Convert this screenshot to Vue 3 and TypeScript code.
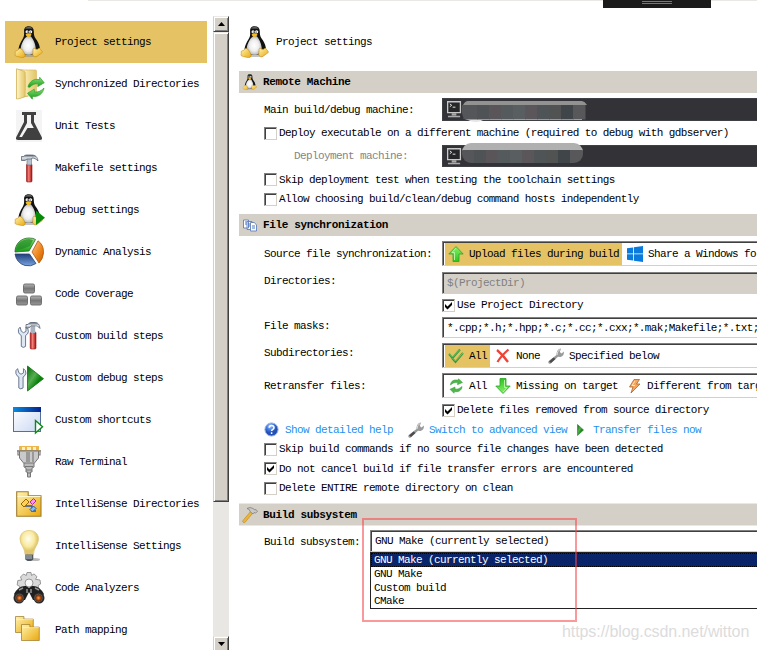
<script setup lang="ts">
interface NavItem { icon: string; label: string }

const nav: NavItem[] = [
  { icon: 'tux', label: 'Project settings' },
  { icon: 'syncdir', label: 'Synchronized Directories' },
  { icon: 'flask', label: 'Unit Tests' },
  { icon: 'hammer', label: 'Makefile settings' },
  { icon: 'tuxplay', label: 'Debug settings' },
  { icon: 'pie', label: 'Dynamic Analysis' },
  { icon: 'blocks', label: 'Code Coverage' },
  { icon: 'tools', label: 'Custom build steps' },
  { icon: 'toolplay', label: 'Custom debug steps' },
  { icon: 'window', label: 'Custom shortcuts' },
  { icon: 'serial', label: 'Raw Terminal' },
  { icon: 'intelli', label: 'IntelliSense Directories' },
  { icon: 'bulb', label: 'IntelliSense Settings' },
  { icon: 'binoc', label: 'Code Analyzers' },
  { icon: 'folders', label: 'Path mapping' },
]

const options: string[] = ['GNU Make (currently selected)', 'GNU Make', 'Custom build', 'CMake']
const mosaic: string[] = ['#54565a', '#505356', '#5a5558', '#555a5c', '#595e60', '#5b5659', '#4f5456', '#505352', '#40454a', '#58575a']
</script>

<template>
  <div class="page">
    <svg class="defs" width="0" height="0">
      <defs>
        <linearGradient id="gYellow" x1="0" y1="0" x2="1" y2="1"><stop offset="0" stop-color="#fff3b0" /><stop offset="1" stop-color="#eaa80c" /></linearGradient>
        <linearGradient id="gPale" x1="0" y1="0" x2="1" y2="0"><stop offset="0" stop-color="#fff6c8" /><stop offset="1" stop-color="#e3c566" /></linearGradient>
        <linearGradient id="gRed" x1="0" y1="0" x2="1" y2="0"><stop offset="0" stop-color="#a81414" /><stop offset=".4" stop-color="#f48078" /><stop offset="1" stop-color="#a30e0e" /></linearGradient>
        <linearGradient id="gSteel" x1="0" y1="0" x2="0" y2="1"><stop offset="0" stop-color="#59616e" /><stop offset=".5" stop-color="#e6ebf1" /><stop offset="1" stop-color="#788495" /></linearGradient>
        <linearGradient id="gGreen" x1="0" y1="0" x2="0" y2="1"><stop offset="0" stop-color="#8de37a" /><stop offset="1" stop-color="#159a16" /></linearGradient>
        <linearGradient id="gArrow" x1="0" y1="0" x2="0" y2="1"><stop offset="0" stop-color="#8af06a" /><stop offset="1" stop-color="#2cc41c" /></linearGradient>
        <linearGradient id="gPlay" x1="0" y1="0" x2="1" y2="1"><stop offset="0" stop-color="#06690a" /><stop offset=".4" stop-color="#54ae50" /><stop offset=".65" stop-color="#087f0a" /><stop offset="1" stop-color="#14b514" /></linearGradient>
        <linearGradient id="gBlue" x1="0" y1="0" x2="0" y2="1"><stop offset="0" stop-color="#203f7b" /><stop offset="1" stop-color="#78a5e0" /></linearGradient>
        <linearGradient id="gOrange" x1="0" y1="0" x2="1" y2="1"><stop offset="0" stop-color="#ffc38b" /><stop offset=".6" stop-color="#ed8117" /><stop offset="1" stop-color="#bd5a06" /></linearGradient>
        <linearGradient id="gGrey" x1="0" y1="0" x2="0" y2="1"><stop offset="0" stop-color="#b5b5b5" /><stop offset=".5" stop-color="#777" /><stop offset="1" stop-color="#989898" /></linearGradient>
        <linearGradient id="gWin" x1="0" y1="0" x2="1" y2="1"><stop offset="0" stop-color="#fff" /><stop offset="1" stop-color="#cad8f4" /></linearGradient>
        <linearGradient id="gBar" x1="0" y1="0" x2="1" y2="0"><stop offset="0" stop-color="#0a8ce0" /><stop offset="1" stop-color="#05248f" /></linearGradient>
        <radialGradient id="gBelly"><stop offset="0" stop-color="#fff" /><stop offset=".6" stop-color="#eee" /><stop offset="1" stop-color="#bcbcbc" /></radialGradient>
        <radialGradient id="gBulb" cx=".45" cy=".35"><stop offset="0" stop-color="#fffdf0" /><stop offset=".65" stop-color="#f9eaa0" /><stop offset="1" stop-color="#dfc66c" /></radialGradient>
        <radialGradient id="gLens"><stop offset="0" stop-color="#ffa04c" /><stop offset=".5" stop-color="#b34a0c" /><stop offset="1" stop-color="#2b1c14" /></radialGradient>
        <radialGradient id="gHelp" cx=".4" cy=".25"><stop offset="0" stop-color="#9fc4ff" /><stop offset=".6" stop-color="#3f76de" /><stop offset="1" stop-color="#2450b4" /></radialGradient>
      </defs>

      <symbol id="tux" viewBox="0 0 32 32">
        <ellipse cx="16" cy="29.5" rx="9" ry="1.6" fill="#888" opacity=".5" />
        <path d="M15.600.2c-3.400 0-4.600 2.200-4.500 5 .1 3.600.2 5.200-1.600 8C7.600 16.300 6 19.400 5.600 22.500c-.2 2.300 1 4 3.400 6h14c3-1.500 4.300-4 3.800-7-.5-3.300-2.200-6.400-4.200-9-1.500-2-1.800-4-1.800-7.200C20.800 2 19 .2 15.600.2z" fill="#111" />
        <path d="M12 2.500c.7-1.600 6.500-1.800 7.600 0z" fill="#7b7b7b" />
        <path d="M14.500 10.300c-2.200 1.200-3.700 3.200-4.900 5.700-1.600 3.300-2.500 6-1.300 9 1.500 3.200 5.300 4.300 8.700 3.700 4.200-.8 6-4 5.600-7.700-.5-4-2.600-8.200-4.800-10.700z" fill="url(#gBelly)" />
        <circle cx="14" cy="5.800" r="1.500" fill="#fff" /><circle cx="17.600" cy="5.800" r="1.600" fill="#fff" />
        <circle cx="14.300" cy="6" r=".6" fill="#111" /><circle cx="17.300" cy="6" r=".6" fill="#111" />
        <path d="M12.600 8.500c1.500-1.700 4-1.800 6 .2-1 1.500-2.500 2.300-3.600 2.300-1 0-1.800-1-2.400-2.500z" fill="#f3bc22" />
        <path d="M2.500 25.200c1.500-.5 3-1.300 3.800-2.600 1.800-.6 3 1 4 2.800s2.500 3.600 1.600 5c-1 1.500-3 1.400-4.600.8-1.600-.5-4-.7-5-1.500-.8-.8.200-2 0-2.800-.2-.8-.6-1.300.2-1.700z" fill="url(#gYellow)" stroke="#c48a08" stroke-width=".6" />
        <path d="M20 24c-.2-1.500 1-2.200 2-1.300 1.500 1 3.200.8 4-.6 1.300 0 1.500 1.800 2.500 2.600 1 .7 1.300 1.600.2 2.300-2 1.200-3 2.200-4.600 3.300-1.600 1-4 .5-4.300-1.600-.2-1.600.4-3 .2-4.700z" fill="url(#gYellow)" stroke="#c48a08" stroke-width=".6" />
      </symbol>
      <symbol id="tuxplay" viewBox="0 0 32 32"><use href="#tux" width="32" height="32" /><path d="M23 16.500v14.500l9-7.200z" fill="#078a0a" /></symbol>
      <symbol id="syncdir" viewBox="0 0 32 32">
        <path d="M3.500.8 15 2.500v26L3.500 31z" fill="#d8ba62" />
        <path d="M8 2h14.500q1 0 1 1v24q0 1-1 1H8z" fill="url(#gPale)" stroke="#d8bd6a" stroke-width=".7" />
        <path d="M3.500.8c1 .2 8 2.400 8.500 3.200.4.600.4 22 0 24-.3 1.500-7 3-8.500 3z" fill="url(#gPale)" stroke="#cfae54" stroke-width=".7" />
        <path d="M15 19c1-5 6-9 11.500-7.200l.2-2.500 4.500 5.500-6.500 3.800.3-2.600c-3-.7-6 .5-8 3.200z" fill="url(#gGreen)" stroke="#2da22b" stroke-width=".7" />
        <path d="M31 20c-1 5.500-5.500 9.500-11.500 8.200l-.2 3-4.800-6 6.800-4 .1 2.800c3.600.5 6.600-.8 9.600-4z" fill="url(#gGreen)" stroke="#2da22b" stroke-width=".7" />
      </symbol>
      <symbol id="flask" viewBox="0 0 32 32">
        <rect x="3" width="26" height="32" fill="#f4f4f4" />
        <path d="M9 2h14v3h-2v7l7.700 15q1.300 3-2 3H5.300q-3.300 0-2-3L11 12V5H9z" fill="#404040" />
        <path d="M14 5h4v8l2.800 5h-6.300l-5.500 9H6.300L14 13z" fill="#f4f4f4" />
      </symbol>
      <symbol id="hammer" viewBox="0 0 32 32">
        <rect x="13.500" y="12" width="5.500" height="18" rx="1" fill="url(#gRed)" stroke="#951414" stroke-width=".6" />
        <path d="M14 6h4.500v7H14z" fill="#b8c2cf" stroke="#657181" stroke-width=".6" />
        <path d="M8.500 4.500h2q1-1.500 3-1.500h5c4 0 6 2 6.500 6-2-2.200-3.800-3-6-3l-.5 1H14l-2 1.500H8.500z" fill="url(#gSteel)" stroke="#4f5968" stroke-width=".7" />
      </symbol>
      <symbol id="pie" viewBox="0 0 32 32">
        <path d="M2 16C2 8 8 2 16 2q4.500 0 6.500 1.500L16 15z" fill="url(#gGreen)" stroke="#28692a" stroke-width=".8" />
        <path d="M5 8Q10 3 16 3l4 1-3 6q-6 3-14 4z" fill="#1e8622" opacity=".65" />
        <path d="M25 4.800Q31 9 30.500 17 30 23 26 27l-7-11z" fill="url(#gOrange)" stroke="#b45b09" stroke-width=".8" />
        <path d="M2 18h14.500l6.500 9.500Q18 31 12 29.500 3.500 27 2 18z" fill="url(#gBlue)" stroke="#29416e" stroke-width=".8" />
      </symbol>
      <symbol id="blocks" viewBox="0 0 32 32">
        <g fill="url(#gGrey)" stroke="#666" stroke-width=".9"><rect x="10.500" y="6" width="11" height="9" rx="1.500" /><rect x="3.500" y="18" width="11" height="9" rx="1.500" /><rect x="17.500" y="18" width="11" height="9" rx="1.500" /></g>
      </symbol>
      <symbol id="spanner" viewBox="0 0 12 24">
        <path d="M2.700 1.200Q0 3 1 6.500 1.800 9 4 10v11.500q2 2 4.500 0V10q2.600-1.400 3-4 .2-3-2.600-4.800v4.500Q6.200 8.500 4 5.500z" transform="scale(.95)" fill="#dfe7f2" stroke="#62738c" stroke-width="1" />
      </symbol>
      <symbol id="tools" viewBox="0 0 32 32">
        <use href="#spanner" x="4.500" y="6" width="12" height="24" />
        <rect x="17.200" y="12" width="5.800" height="17" rx="1" fill="url(#gRed)" stroke="#9c1212" stroke-width=".6" />
        <path d="M17.500 6h4.700v7h-4.700z" fill="#a9b2be" />
        <path d="M13 4.500h2q1-2 3-2h4c3 0 4.500 2 5 6-2-2.200-3-2.700-4.500-2.700h-4.500L16 8h-3z" fill="url(#gSteel)" stroke="#4f5968" stroke-width=".7" />
      </symbol>
      <symbol id="toolplay" viewBox="0 0 32 32">
        <use href="#spanner" x="2" y="5.500" width="12" height="24" />
        <path d="M14.500 4v25l16-12.300z" fill="url(#gPlay)" stroke="#08720b" stroke-width=".8" />
      </symbol>
      <symbol id="window" viewBox="0 0 32 32">
        <rect x=".5" y="3.500" width="27" height="24" fill="url(#gWin)" stroke="#56709c" /><rect y="3" width="28" height="5" fill="url(#gBar)" />
        <path d="M22.500 16.500v12.500l7-6.200z" fill="#fff" stroke="#078a16" stroke-width="1.400" />
      </symbol>
      <symbol id="serial" viewBox="0 0 32 32">
        <path d="M6 0h20v5H6z" fill="#edb64d" /><path d="M9 1h3v3H9zM14 1h4v3h-4zM20 1h3v3h-3z" fill="#fff0be" />
        <path d="M4 5h24M5 4v5h22V4" fill="none" stroke="#777" stroke-width="1.200" />
        <path d="M6.500 5h19v7L21 17.500H11L6.500 12z" fill="#cacaca" stroke="#777" /><path d="M13 6h4v10h-4zM19 6h2v10h-2z" fill="#999" />
        <path d="M11 17h10v4l-2 1v4h-1.500v5h-3v-5H13v-4l-2-1z" fill="#bbb" stroke="#777" /><path d="M12 20.500h8M13 24h6M14 27h4" stroke="#777" />
      </symbol>
      <symbol id="folder" viewBox="0 0 26 26" preserveAspectRatio="none"><path d="M.7.800h11.500v4H25v20.500H.7z" fill="url(#gYellow)" stroke="#a07c30" stroke-width="1.100" /><path d="M1.500 5.500h23" stroke="#fff7ce" /></symbol>
      <symbol id="intelli" viewBox="0 0 32 32">
        <use href="#folder" x="3" y="3" width="26" height="26" />
        <path d="M12 18h7v5h4M17 14h5" fill="none" stroke="#3154a5" stroke-width="1.400" />
        <path d="m8 16 5-5 3 3-5 5z" fill="#ffd255" stroke="#9b670d" /><path d="m17 14 3.500-3.500L23 13l-3.500 3.500z" fill="#ff91ec" stroke="#b02da4" /><path d="m17 21.500 3.500-3.500 2.500 2.500-3.500 3.500z" fill="#83bcf8" stroke="#235caa" />
      </symbol>
      <symbol id="bulb" viewBox="0 0 32 32">
        <ellipse cx="22" cy="29.500" rx="5" ry="1.500" fill="#bbb" />
        <path d="M16.200.5C10 .5 7 4.500 7 9c0 6 5 8.500 5 15.500h8.500C20.500 17.500 25.500 15 25.500 9c0-4.500-3-8.500-9.300-8.500z" fill="url(#gBulb)" stroke="#dec97f" stroke-width=".8" />
        <path d="M12.300 24.500h8v5L18 31h-3.500l-2.200-1.500z" fill="#52585f" /><path d="M13 26h6M13 28h6" stroke="#b6bec6" />
      </symbol>
      <symbol id="binoc" viewBox="0 0 32 32">
        <path d="m14 .500 4 0 .5 3 2.500-1.600 3 2.800-1.500 2.600 4.500.7.600 4-2.500 1.500 1 5H6l1-4-2.800-1.500.6-4.500 4-.5L7.500 5l3-3 2.800 1.500z" fill="#dadada" stroke="#8e8e8e" stroke-width=".9" /><circle cx="16" cy="11" r="4" fill="#f8f8f8" stroke="#999" />
        <path d="M1 22Q6 13 13 14l3 2 3-2q7-1 12 8l-4 6H20l-4-8-4 8H5z" fill="#202020" /><path d="m6 18 4-2M22 16l4 2M14 17v4M18 17v4" stroke="#969696" stroke-width="1.500" />
        <circle cx="6" cy="26" r="5.500" fill="#2a2a2a" /><circle cx="26" cy="26" r="5.500" fill="#2a2a2a" /><circle cx="6.500" cy="26" r="3.900" fill="url(#gLens)" stroke="#777" stroke-width=".6" /><circle cx="25.500" cy="26" r="3.900" fill="url(#gLens)" stroke="#777" stroke-width=".6" />
      </symbol>
      <symbol id="folders" viewBox="0 0 32 32"><use href="#folder" x="2" y="2" width="19" height="17" /><use href="#folder" x="8" y="10" width="19" height="17" /></symbol>

      <symbol id="wrench" viewBox="0 0 16 16">
        <path d="M1 15.500q-1.500-1.300 0-2.800L8.500 7Q8 3 11 1l2-.5L11.800 4l1.700 1.500 2.500-2Q16 8 12.500 9l-2.500-.2-7 6.500q-1 .9-2 .2z" fill="#9a9a9a" /><path d="m1 13.500 2 1.500 4.500-4-2-1.500z" fill="#4c4c4c" /><path d="M9 7q0-4 3-5.500" fill="none" stroke="#e0e0e0" />
      </symbol>
      <symbol id="arrow" viewBox="0 0 16 16"><path d="M8 .5 15.200 8H11v7.500H5V8H.8z" fill="url(#gArrow)" stroke="#2ba52a" stroke-width=".8" /><path d="M8 2 4 6.500h2.500V14" fill="none" stroke="#b6f4a4" /></symbol>
      <symbol id="recycle" viewBox="0 0 16 16"><path d="M2.500 7c0-4 4-6 7.500-4.700L10.500.8l4 3.700-5 2.200.2-2C6.500 4 5 5 2.500 7zM14 8.500c0 4-4 6-7.500 5l-.5 1.800-4-4L7 9v2c3 .5 4.500-.5 7-2.500z" fill="#4fb54d" stroke="#319c37" stroke-width=".5" /></symbol>
      <symbol id="pc" viewBox="0 0 16 18"><path d="M.7.700h13.600v11.600H.7z" fill="#272729" stroke="#c8c8c8" stroke-width="1.400" /><path d="m3 3 2 1.500L3 6M6 6.500h3" fill="none" stroke="#eee" /><path d="M5 13h5v2.500H5z" fill="#aaa" /><path d="M1 16.500h13" stroke="#aaa" stroke-width="1.600" /></symbol>
    </svg>

    <div class="topline"></div>
    <div class="grip"><i></i><i></i></div>

    <nav class="side">
      <div v-for="(n, i) in nav" :key="n.label" class="nav-item" :class="{ active: i === 0 }">
        <svg class="i32"><use :href="'#' + n.icon" width="32" height="32" /></svg>
        <span>{{ n.label }}</span>
      </div>
    </nav>

    <div class="scroll">
      <div class="sbtn"><svg width="7" height="4"><path d="M3.500 0 7 4H0z" /></svg></div>
      <div class="thumb"></div>
      <div class="track"></div>
      <div class="sbtn"><svg width="7" height="4"><path d="M0 0h7L3.500 4z" /></svg></div>
    </div>

    <main class="main">
      <header class="title"><svg class="i32"><use href="#tux" width="32" height="32" /></svg><span>Project settings</span></header>

      <h2 class="sec"><svg class="i16"><use href="#tux" width="16" height="16" /></svg><span>Remote Machine</span></h2>
      <div class="row r-main">
        <label>Main build/debug machine:</label>
        <div class="box dark">
          <svg class="pc"><use href="#pc" width="15" height="17" /></svg>
          <svg class="blur one" width="128" height="24" viewBox="0 0 128 24">
            <path d="M7 3H121q3 .5 5 4H2Q4 3 7 3z" fill="#929292" />
            <path d="M2 20.500h119V22H22q-7 4-15 0z" fill="#e6e4e4" />
            <path d="M1 7h9v14H3Q0 16 1 7z" fill="#54565a" />
            <rect v-for="(c, k) in mosaic" :key="k" :x="4 + k * 12" y="7" width="12.500" height="14.500" :fill="c" />
          </svg>
        </div>
      </div>
      <div class="check h18"><i class="cb"></i>Deploy executable on a different machine (required to debug with gdbserver)</div>
      <div class="row r-deploy">
        <label class="dim">Deployment machine:</label>
        <div class="box dark">
          <svg class="pc"><use href="#pc" width="15" height="17" /></svg>
          <svg class="blur two" width="122" height="22" viewBox="0 0 122 22">
            <clipPath id="pill"><rect width="121" height="20" rx="9" /></clipPath>
            <g clip-path="url(#pill)"><rect width="121" height="8" fill="#b0b0b0" /><rect v-for="(c, k) in mosaic" :key="k" :x="k * 12" y="7" width="13" height="13" :fill="c" /></g>
          </svg>
        </div>
      </div>
      <div class="check h19"><i class="cb"></i>Skip deployment test when testing the toolchain settings</div>
      <div class="check h20 last"><i class="cb"></i>Allow choosing build/clean/debug command hosts independently</div>

      <h2 class="sec">
        <svg class="i16" viewBox="0 0 16 16"><g fill="#fff" stroke="#6580b5" stroke-width=".9"><path d="M1.500 3h5v8h-5zM5 4.500h5v8H5z" /><path d="M8.500 5.500h3.800L14.500 8v6h-6z" /></g><path d="M3 5h2M3 7h2M6 7h2M6 9h2M10 9h3M10 11h3" stroke="#4b78ca" /></svg>
        <span>File synchronization</span>
      </h2>
      <div class="row r-source">
        <label>Source file synchronization:</label>
        <div class="box choices">
          <span class="opt on upload"><svg class="i16"><use href="#arrow" width="16" height="16" /></svg>Upload files during build</span>
          <span class="opt share"><svg class="i16" viewBox="0 0 16 16"><path d="M0 2.200 6 1.400v6.100H0zM6.800 1.300 16 0v7.500H6.800zM0 8.300h6v6.200l-6-.8zM6.800 8.300H16V16l-9.200-1.300z" fill="#0a7bdc" /></svg>Share a Windows fo</span>
        </div>
      </div>
      <div class="row r-dirs"><label>Directories:</label><div class="box disabled">$(ProjectDir)</div></div>
      <div class="check h18 indent"><i class="cb on"><svg viewBox="0 0 9 9"><path d="M1 3v3l2.500 2.500L8 4V1L3.500 5.500z" /></svg></i>Use Project Directory</div>
      <div class="row r-masks"><label>File masks:</label><div class="box">*.cpp;*.h;*.hpp;*.c;*.cc;*.cxx;*.mak;Makefile;*.txt;</div></div>
      <div class="row r-sub">
        <label>Subdirectories:</label>
        <div class="box choices">
          <span class="opt on all"><svg class="i16" viewBox="0 0 16 16"><g fill="none" stroke="#3c9a3a" stroke-width="2"><path d="m1 6 3.500 4L12 1.500" /><path d="m4 10 3.500 4L15 5" /></g><path d="m1.500 6 3 3L12 1.500M4.500 10l3 3L15 5" fill="none" stroke="#8edb80" stroke-width=".7" /></svg>All</span>
          <span class="opt none"><svg class="i16" viewBox="0 0 16 16"><path d="M2 2q6 5 11 12M13.500 1.500Q6 8 2.500 14" fill="none" stroke="#ee4436" stroke-width="2.300" /></svg>None</span>
          <span class="opt spec"><svg class="i16"><use href="#wrench" width="16" height="16" /></svg>Specified below</span>
        </div>
      </div>
      <div class="row r-re">
        <label>Retransfer files:</label>
        <div class="box choices">
          <span class="opt all"><svg class="i16"><use href="#recycle" width="16" height="16" /></svg>All</span>
          <span class="opt none"><svg class="i16 down"><use href="#arrow" width="16" height="16" /></svg>Missing on target</span>
          <span class="opt diff"><svg class="i16" viewBox="0 0 16 16"><path d="M8 1.500h5.500L10.500 6H14l-9 9 2-6H3.500z" fill="#f5a55c" stroke="#a96831" stroke-width=".8" /><path d="M9 3 6 7.500h3" stroke="#ffe6b0" fill="none" /></svg>Different from targ</span>
        </div>
      </div>
      <div class="check h20 indent"><i class="cb on"><svg viewBox="0 0 9 9"><path d="M1 3v3l2.500 2.500L8 4V1L3.500 5.500z" /></svg></i>Delete files removed from source directory</div>
      <div class="links">
        <a class="help"><svg class="i16" viewBox="0 0 16 16"><circle cx="7.500" cy="7.500" r="6.600" fill="url(#gHelp)" stroke="#9db4e4" /><path d="M5.200 5.800q0-2.300 2.400-2.300T10 5.800c0 1.600-2.400 1.600-2.400 3.300M7.600 10.300v1.700" fill="none" stroke="#fff" stroke-width="1.500" /></svg>Show detailed help</a>
        <a class="adv"><svg class="i16"><use href="#wrench" width="16" height="16" /></svg>Switch to advanced view</a>
        <a class="go"><svg width="7" height="12" viewBox="0 0 7 12"><path d="M.5.500v11L6.500 6z" fill="url(#gPlay)" stroke="#2b7c30" stroke-width=".6" /></svg>Transfer files now</a>
      </div>
      <div class="check h20"><i class="cb"></i>Skip build commands if no source file changes have been detected</div>
      <div class="check h19"><i class="cb on"><svg viewBox="0 0 9 9"><path d="M1 3v3l2.500 2.500L8 4V1L3.500 5.500z" /></svg></i>Do not cancel build if file transfer errors are encountered</div>
      <div class="check h20 last"><i class="cb"></i>Delete ENTIRE remote directory on clean</div>

      <h2 class="sec edge">
        <svg class="i16" viewBox="0 0 16 16"><path d="M1.500 15.500q-1.500-.8-.5-2L9 4l2 1.800-7.500 9q-.8 1.200-2 .7z" fill="#edb632" stroke="#b78318" stroke-width=".6" /><path d="M5 1.500Q8-.5 11 1.500L13 3l1-.5 1.500 2L13.500 6l-1.500-.5-1 1.500-3-2.500Q8 2 5 1.500z" fill="#c9c9c9" stroke="#777" stroke-width=".7" /></svg>
        <span>Build subsystem</span>
      </h2>
      <div class="row r-build">
        <label>Build subsystem:</label>
        <div class="combo">
          <div class="box">GNU Make (currently selected)</div>
          <div class="popup"><div v-for="(o, i) in options" :key="o" class="item" :class="{ sel: i === 0 }">{{ o }}</div></div>
        </div>
      </div>
    </main>

    <div class="mark"></div>
    <div class="watermark">https://blog.csdn.net/witton</div>
  </div>
</template>

<style>
body { margin: 0; background: #fff; overflow: hidden; }
</style>

<style scoped>
.page { position: relative; width: 757px; height: 650px; overflow: hidden; display: flex; background: #fff; color: #000; font: 11px/14px "Liberation Mono", monospace; letter-spacing: -0.605px; box-sizing: border-box; }
.page * { box-sizing: border-box; }
span, label, .box, .check, .links, .item { white-space: nowrap; }
svg { display: block; flex: none; overflow: visible; }
.defs { position: absolute; }
.i32 { width: 32px; height: 32px; }
.i16 { width: 16px; height: 16px; }
.topline { position: absolute; left: 88px; right: 0; top: 0; height: 1px; background: #e9e8e4; }
.grip { position: absolute; left: 603px; top: 0; width: 108px; height: 8px; padding-top: 1px; background: #1b1b1b; display: flex; flex-direction: column; align-items: center; gap: 1px; }
.grip i { width: 30px; height: 1px; background: #777; }

.side { width: 213px; flex: none; padding: 21px 6px 0 5px; }
.nav-item { height: 42px; padding-left: 8px; display: flex; align-items: center; gap: 10px; }
.nav-item.active { background: #e5c365; }

.scroll { width: 16px; flex: none; margin-top: 16px; display: flex; flex-direction: column; }
.sbtn, .thumb { background: #d4d0c8; border: 1px solid; border-color: #eceae6 #404040 #404040 #d4d0c8; box-shadow: inset 1px 1px #fff, inset -1px -1px #808080; flex: none; }
.sbtn { height: 16px; display: flex; align-items: center; justify-content: center; }
.thumb { height: 470px; }
.track { height: 134px; flex: none; background: #e9e7e3; }

.main { flex: none; width: 518px; margin-left: 10px; overflow: hidden; display: flex; flex-direction: column; }
.title { height: 71px; flex: none; padding-top: 13px; display: flex; align-items: center; gap: 5px; }
.sec { margin: 0; height: 22px; flex: none; padding-left: 3px; display: flex; align-items: center; gap: 5px; background: #d4d0c8; font-size: 11px; font-weight: bold; letter-spacing: -0.35px; }
.sec.edge { height: 23px; border-top: 1px solid #eae8e4; border-bottom: 1px solid #eae8e4; }
.row { flex: none; display: grid; grid-template-columns: 178px 330px; padding-left: 25px; align-items: start; }
.row label { display: block; }
.row .dim { color: #858585; padding-left: 30px; }
.box { border: 1px solid; border-color: #808080 transparent #d4d0c8 #808080; box-shadow: inset 1px 1px #404040; height: 22px; display: flex; align-items: center; padding-left: 4px; overflow: hidden; }
.box.disabled { background: #d4d0c8; color: #808080; }
.box.dark { position: relative; background: #333337; border-color: #3f3f46; box-shadow: none; overflow: visible; }
.pc { width: 15px; height: 17px; }
.blur { position: absolute; }
.blur.one { left: 18px; top: -1px; }
.blur.two { left: 19px; top: -3px; }

.r-main { height: 31px; } .r-main label { padding-top: 10px; } .r-main .box { height: 23px; margin-top: 5px; }
.r-deploy { height: 28px; } .r-deploy label { padding-top: 7px; } .r-deploy .box { margin-top: 3px; }
.r-source { height: 31px; } .r-source label { padding-top: 11px; } .r-source .box { height: 25px; margin-top: 5px; }
.r-dirs { height: 29px; } .r-dirs label { padding-top: 7px; } .r-dirs .box { margin-top: 5px; }
.r-masks { height: 27px; } .r-masks label { padding-top: 5px; } .r-masks .box { height: 21px; margin-top: 3px; }
.r-sub { height: 30px; } .r-sub label { padding-top: 5px; } .r-sub .box { height: 25px; margin-top: 2px; }
.r-re { height: 29px; } .r-re label { padding-top: 8px; } .r-re .box { height: 25px; margin-top: 2px; }
.r-build { height: 60px; grid-template-columns: 106px 400px; } .r-build label { padding-top: 9px; } .r-build .box { height: 22px; margin-top: 4px; }

.page .choices { padding: 1px 0 0 2px; align-items: stretch; }
.opt { display: flex; align-items: center; gap: 5px; flex: none; padding-left: 3px; }
.opt.on { background: #e5c365; }
.opt.upload { width: 177px; }
.opt.share { padding-left: 5px; }
.opt.all { width: 45px; }
.opt.none { padding-left: 5px; width: 55px; }
.opt.spec { padding-left: 3px; }
.r-re .opt.none { width: 134px; }
.opt.diff { padding-left: 2px; }
.down { transform: rotate(180deg); }

.check { flex: none; display: flex; align-items: center; gap: 2px; padding-left: 25px; }
.check.indent { padding-left: 203px; }
.h18 { height: 18px; } .h19 { height: 19px; } .h20 { height: 20px; }
.last { margin-bottom: 5px; }
.cb { width: 13px; height: 13px; flex: none; background: #fff; border: 1px solid; border-color: #808080 #d4d0c8 #d4d0c8 #808080; box-shadow: inset 1px 1px #404040; padding: 1px; }
.cb svg { width: 9px; height: 9px; }

.links { height: 19px; flex: none; padding-left: 25px; display: flex; align-items: center; color: #1e90f0; }
.links a { display: flex; align-items: center; gap: 5px; flex: none; }
.links .help { width: 144px; }
.links .adv { width: 169px; }
.links .go { gap: 9px; }

.combo { position: relative; }
.popup { position: absolute; left: 0; top: 26px; width: 400px; height: 57px; border: 1px solid #222; background: #fff; }
.item { padding-left: 3px; height: 14px; line-height: 14px; }
.item:last-child { height: 13px; line-height: 13px; }
.item.sel { background: #0a246a; color: #fff; outline: 1px dotted #000; outline-offset: -1px; }

.mark { position: absolute; left: 362px; top: 518px; width: 215px; height: 104px; border: 2px solid rgba(245, 70, 75, 0.55); }
.watermark { position: absolute; left: 562px; top: 622px; font: 16px/20px "Liberation Sans", sans-serif; letter-spacing: -0.08px; color: #dcdcdc; }
</style>
